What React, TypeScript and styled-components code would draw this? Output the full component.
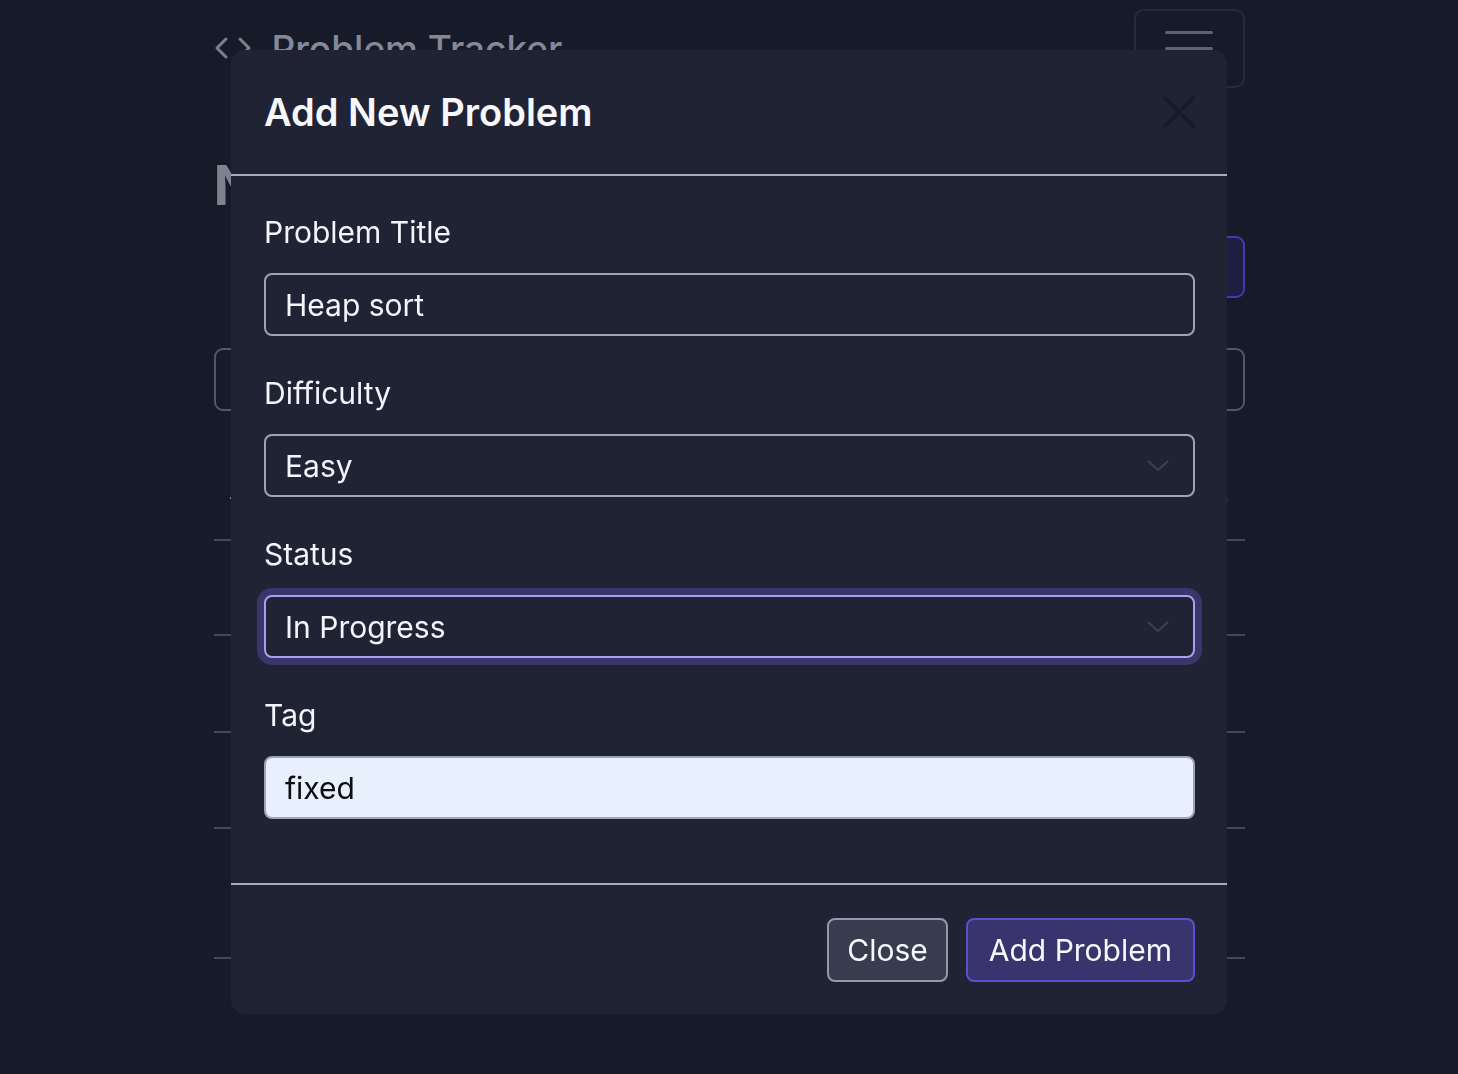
import React from "react";
import styled, { createGlobalStyle } from "styled-components";

const GlobalStyle = createGlobalStyle`
  * { box-sizing: border-box; }
  html, body { margin: 0; padding: 0; }
  body {
    background: #161a29;
    font-family: "Inter", "Noto Sans", "Liberation Sans", sans-serif;
    color: #f3f5fa;
    min-height: 1074px;
    overflow: hidden;
  }
`;

/* ---------- background page ---------- */
const Page = styled.div`
  width: 1031px;
  margin: 0 auto;
`;

const Navbar = styled.header`
  height: 96px;
  display: flex;
  align-items: center;
  justify-content: space-between;
`;

const Brand = styled.div`
  display: flex;
  align-items: center;
  gap: 20px;
  color: #858997;
  font-size: 37px;
  font-weight: 500;
`;

const MenuButton = styled.button`
  width: 111px;
  height: 79px;
  background: transparent;
  border: 2px solid #262b3b;
  border-radius: 10px;
  display: flex;
  flex-direction: column;
  align-items: center;
  justify-content: center;
  gap: 13px;
  padding: 0;
`;

const MenuBar = styled.span`
  width: 48px;
  height: 3px;
  border-radius: 2px;
  background: #5d6272;
`;

const PageTitle = styled.h1`
  margin: 56px 0 0;
  font-size: 55px;
  line-height: 66px;
  font-weight: 700;
  color: #7e818e;
`;

const Toolbar = styled.div`
  margin-top: 18px;
  display: flex;
  justify-content: flex-end;
`;

const PrimaryGhost = styled.button`
  height: 62px;
  padding: 0 28px;
  border-radius: 9px;
  background: #1e1d42;
  border: 2px solid #4538b0;
  color: #7e7fa0;
  font: inherit;
  font-size: 30px;
`;

const Search = styled.div`
  margin-top: 50px;
  height: 63px;
  border: 2px solid #525768;
  border-radius: 9px;
`;

const Table = styled.div`
  margin-top: 40px;
  display: flex;
  flex-direction: column;
  color: #8a8d9a;
  font-size: 28px;
`;

const Row = styled.div<{ $h: number }>`
  height: ${(p) => p.$h}px;
  display: flex;
  align-items: center;
  justify-content: space-between;
  padding: 0 16px;
  border-bottom: 2px solid #444959;
`;

/* ---------- modal ---------- */
const Overlay = styled.div`
  position: fixed;
  inset: 0;
  display: flex;
  justify-content: center;
  align-items: flex-start;
`;

const Dialog = styled.div`
  margin-top: 50px;
  width: 996px;
  background: #1f2334;
  border-radius: 14px;
  display: flex;
  flex-direction: column;
`;

const Header = styled.div`
  height: 126px;
  padding: 0 32px 0 33px;
  display: flex;
  align-items: center;
  justify-content: space-between;
  border-bottom: 2px solid #a6abc1;
`;

const Title = styled.h5`
  margin: 0;
  font-size: 38px;
  line-height: 45px;
  font-weight: 600;
  color: #f6f8fc;
`;

const CloseX = styled.button`
  width: 32px;
  height: 32px;
  padding: 0;
  border: 0;
  background: transparent;
  display: flex;
`;

const Body = styled.div`
  padding: 34px 32px 29px 33px;
  display: flex;
  flex-direction: column;
`;

const Group = styled.div`
  margin-bottom: 35px;
  display: flex;
  flex-direction: column;
`;

const Label = styled.label`
  font-size: 30px;
  line-height: 45px;
  margin-bottom: 18px;
  color: #f3f5fa;
`;

const Field = styled.div<{ $focused?: boolean; $autofill?: boolean }>`
  height: 63px;
  padding: 0 20px 0 19px;
  display: flex;
  align-items: center;
  justify-content: space-between;
  font-size: 30px;
  border-radius: 8px;
  border: 2px solid ${(p) => (p.$focused ? "#a89ff0" : "#9ea3b7")};
  background: ${(p) => (p.$autofill ? "#e8effd" : "#1f2334")};
  color: ${(p) => (p.$autofill ? "#0c0d12" : "#f3f5fa")};
  box-shadow: ${(p) => (p.$focused ? "0 0 0 7px #3a366c" : "none")};
`;

const Chevron = styled.svg`
  margin-right: 4px;
  flex: none;
`;

const Footer = styled.div`
  border-top: 2px solid #a6abc1;
  padding: 33px 32px 32px;
  display: flex;
  justify-content: flex-end;
  gap: 18px;
`;

const Btn = styled.button<{ $variant: "secondary" | "primary" }>`
  height: 64px;
  padding: 0 ${(p) => (p.$variant === "primary" ? "21px" : "18px")};
  border-radius: 8px;
  font-family: inherit;
  font-size: 30px;
  color: #f6f8fc;
  background: ${(p) => (p.$variant === "primary" ? "#39336e" : "#373d4e")};
  border: 2px solid ${(p) => (p.$variant === "primary" ? "#5a4fcf" : "#9499ad")};
`;

const ChevronIcon = () => (
  <Chevron width="22" height="12" viewBox="0 0 22 12">
    <path d="M1.5 1.5 L11 10 L20.5 1.5" fill="none" stroke="#3b4053" strokeWidth="2.2" strokeLinecap="round" strokeLinejoin="round" />
  </Chevron>
);

export default function App() {
  return (
    <>
      <GlobalStyle />
      <Page>
        <Navbar>
          <Brand>
            <svg width="38" height="24" viewBox="0 0 38 24">
              <path d="M12 3 L3 12 L12 21 M26 3 L35 12 L26 21" fill="none" stroke="#7c808d" strokeWidth="3" strokeLinecap="round" strokeLinejoin="round" />
            </svg>
            <span>Problem Tracker</span>
          </Brand>
          <MenuButton>
            <MenuBar />
            <MenuBar />
            <MenuBar />
          </MenuButton>
        </Navbar>
        <PageTitle>N</PageTitle>
        <Toolbar>
          <PrimaryGhost>+ Add</PrimaryGhost>
        </Toolbar>
        <Search />
        <Table>
          <Row $h={90}>
            <span>#</span>
            <span>s</span>
          </Row>
          <Row $h={95} />
          <Row $h={97}>
            <span>·</span>
          </Row>
          <Row $h={96} />
          <Row $h={130}>
            <span>·</span>
          </Row>
        </Table>
      </Page>

      <Overlay>
        <Dialog>
          <Header>
            <Title>Add New Problem</Title>
            <CloseX aria-label="Close">
              <svg width="32" height="32" viewBox="0 0 32 32">
                <path d="M2 2 L30 30 M30 2 L2 30" stroke="#161a29" strokeWidth="3.2" strokeLinecap="round" />
              </svg>
            </CloseX>
          </Header>
          <Body>
            <Group>
              <Label>Problem Title</Label>
              <Field>Heap sort</Field>
            </Group>
            <Group>
              <Label>Difficulty</Label>
              <Field>
                <span>Easy</span>
                <ChevronIcon />
              </Field>
            </Group>
            <Group>
              <Label>Status</Label>
              <Field $focused>
                <span>In Progress</span>
                <ChevronIcon />
              </Field>
            </Group>
            <Group>
              <Label>Tag</Label>
              <Field $autofill>fixed</Field>
            </Group>
          </Body>
          <Footer>
            <Btn $variant="secondary">Close</Btn>
            <Btn $variant="primary">Add Problem</Btn>
          </Footer>
        </Dialog>
      </Overlay>
    </>
  );
}
